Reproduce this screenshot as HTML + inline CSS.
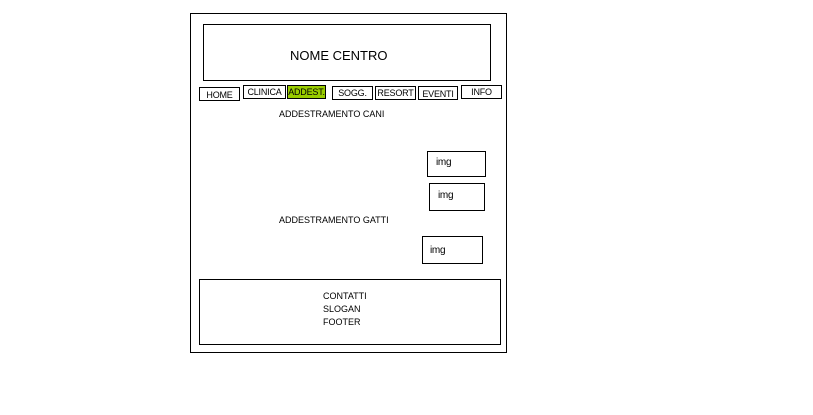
<!DOCTYPE html>
<html><head><style>
body{margin:0;width:813px;height:415px;background:#fff;position:relative;font-family:"Liberation Sans",sans-serif;color:#000;overflow:hidden}
.b{position:absolute;border:1px solid #000;box-sizing:border-box}
.t{position:absolute;font-size:10px;white-space:nowrap}
.n{position:absolute;border:1px solid #000;box-sizing:border-box;font-size:9px;text-align:center;line-height:12px;height:14px;letter-spacing:-0.2px;white-space:nowrap;overflow:hidden}
</style></head><body>
<div class="b" style="left:190px;top:13px;width:317px;height:340px"></div>
<div class="b" style="left:203px;top:24px;width:288px;height:57px"></div>
<div class="t" style="left:290px;top:48px;font-size:13px">NOME CENTRO</div>
<div class="n" style="left:199px;top:87px;width:41px;line-height:14px">HOME</div>
<div class="n" style="left:243px;top:85px;width:43px">CLINICA</div>
<div class="n" style="left:287px;top:85px;width:39px;background:#99cc00">ADDEST.</div>
<div class="n" style="left:332px;top:86px;width:41px">SOGG.</div>
<div class="n" style="left:375px;top:86px;width:41px">RESORT</div>
<div class="n" style="left:418px;top:86px;width:40px;line-height:15px">EVENTI</div>
<div class="n" style="left:461px;top:85px;width:41px">INFO</div>
<div class="t" style="left:279px;top:109px;font-size:9px">ADDESTRAMENTO CANI</div>
<div class="b" style="left:427px;top:151px;width:59px;height:26px"></div>
<div class="t" style="left:436px;top:157px;letter-spacing:-0.3px">img</div>
<div class="b" style="left:429px;top:183px;width:56px;height:28px"></div>
<div class="t" style="left:438px;top:190px;letter-spacing:-0.3px">img</div>
<div class="t" style="left:279px;top:215px;font-size:9px">ADDESTRAMENTO GATTI</div>
<div class="b" style="left:422px;top:236px;width:61px;height:28px"></div>
<div class="t" style="left:430px;top:245px;letter-spacing:-0.3px">img</div>
<div class="b" style="left:199px;top:279px;width:302px;height:66px"></div>
<div class="t" style="left:323px;top:290px;font-size:9px;line-height:13px">CONTATTI<br>SLOGAN<br>FOOTER</div>
</body></html>
